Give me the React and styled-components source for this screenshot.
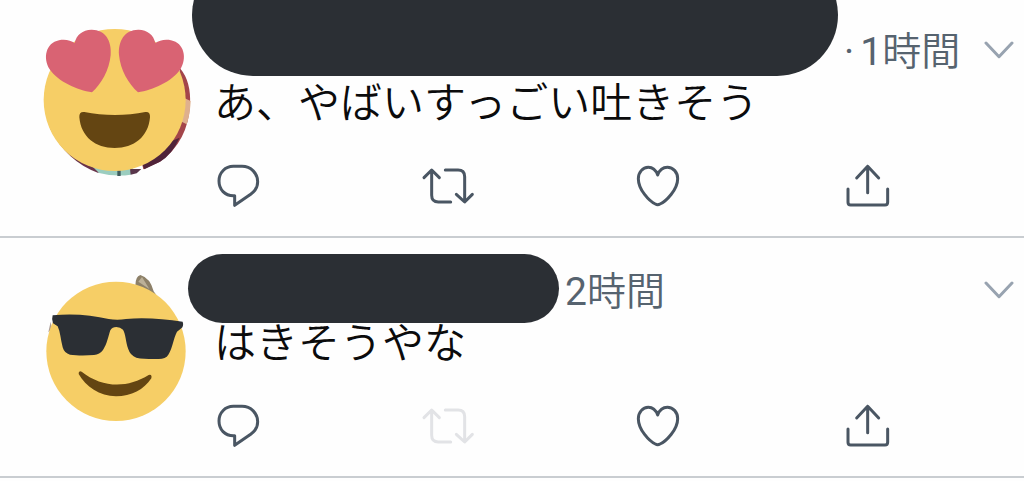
import React from "react";
import styled, { createGlobalStyle } from "styled-components";

const GlobalStyle = createGlobalStyle`
  body {
    margin: 0;
    background-color: #fefefe;
    overflow: hidden;
    font-family: "Noto Sans CJK JP", "Noto Sans", sans-serif;
    font-weight: 350;
  }
`;

const Feed = styled.main`
  margin-top: -2px;
`;

const Tweet = styled.article`
  display: flex;
  gap: 14px;
  padding: 24px 10px 22px 36px;
  border-bottom: 2px solid #c9cdd1;
`;

const Avatar = styled.svg`
  flex: none;
  width: 160px;
  height: 160px;
`;

const Body = styled.div`
  flex: 1;
  min-width: 0;
  padding-top: 4px;
`;

const Header = styled.header`
  display: flex;
  align-items: center;
  height: 48px;
`;

const Name = styled.div`
  position: relative;
  flex: none;
  align-self: stretch;
  width: ${({ $width }) => $width};
`;

const Redaction = styled.span`
  position: absolute;
  inset: ${({ $inset }) => $inset};
  z-index: 1;
  border-radius: 61px;
  background-color: #2b2f34;
`;

const Time = styled.time`
  margin-left: 6px;
  font-family: "Noto Sans CJK JP", sans-serif;
  font-size: 39px;
  line-height: 48px;
  white-space: nowrap;
  color: #56636f;
`;

const Latin = styled.span`
  font-family: Roboto, sans-serif;
  font-weight: 400;
`;

const Dot = styled(Latin)`
  margin-right: 6px;
`;

const MenuButton = styled.button`
  display: flex;
  margin-left: auto;
  padding: 0;
  border: none;
  background: none;
  color: #98a3b0;
`;

const Text = styled.p`
  margin: 0;
  padding-left: 4px;
  font-size: 42px;
  line-height: 52px;
  white-space: nowrap;
  color: #0b0b0c;
`;

const Actions = styled.div`
  display: flex;
  justify-content: space-between;
  margin-top: 32px;
  padding-right: 118px;
`;

const ActionButton = styled.button`
  display: flex;
  padding: 0;
  border: none;
  background: none;
  color: #4a5663;

  &:disabled {
    color: #e2e3e6;
  }
`;

const Icon = styled.svg`
  width: 56px;
  height: 56px;
  fill: none;
  stroke: currentColor;
  stroke-width: 9;
  stroke-linecap: round;
  stroke-linejoin: round;
`;

const Chevron = styled(Icon)`
  width: 30px;
  height: 30px;
`;

const icons = {
  reply:
    "M70 25H96C123 25 143 46 143 71C143 87 136 99 122 109L74 142V113H70C45 113 27 95 27 69C27 44 46 25 70 25Z",
  retweet:
    "M12 59L35 36L58 59M35 38V112Q35 132 55 132H92M76 36H114Q134 36 134 56V130M109 109L134 132L157 109",
  like: "M83 51C77 35 67 28 55 28C38 28 25 43 25 62C25 95 58 130 76 138Q83 142 90 138C108 130 143 95 143 62C143 43 130 28 112 28C99 28 89 35 83 51Z",
  share: "M83 104V25M50 60L83 25L116 60M24 93V133Q24 141 32 141H135Q143 141 143 133V93",
};

const HeartEyes = () => (
  <Avatar viewBox="18 21 480 480" role="img" aria-label="heart eyes">
    <path d="M450 160Q484 200 480 270Q474 380 390 440L340 463L330 420L420 330Z" fill="#a3454a" />
    <path d="M464 250L482 258Q480 300 470 328L455 320Z" fill="#dfb08d" />
    <path d="M420 380L449 368Q425 420 390 440L343 463L335 440Z" fill="#4f2339" />
    <path d="M60 340Q110 440 205 474L220 450Z" fill="#69334a" />
    <path d="M185 452L207 474Q255 486 302 479L312 450Z" fill="#9bcdbf" />
    <path d="M262 462H272V483H262Z" fill="#3f5b5b" />
    <path d="M300 462H334L320 475L302 479Z" fill="#59364b" />
    <circle cx="254" cy="255" r="213" fill="#f6ce66" />
    <path
      d="M186 232C142 226 84 200 59 163C38 130 47 84 87 76C106 72 123 77 134 84C139 59 158 45 184 44C225 43 246 77 242 120C238 165 214 207 186 232Z"
      fill="#d96373"
    />
    <path
      d="M324 232C368 226 426 200 451 163C472 130 463 84 423 76C404 72 387 77 376 84C371 59 352 45 326 44C285 43 264 77 267 120C271 165 296 207 324 232Z"
      fill="#d96373"
    />
    <path
      d="M163 291C220 303 290 303 346 291Q361 289 360 307C355 366 312 399 254 399C196 399 153 366 148 307Q147 289 163 291Z"
      fill="#644512"
    />
  </Avatar>
);

const Sunglasses = () => (
  <Avatar viewBox="18 -9 480 480" role="img" aria-label="sunglasses">
    <path d="M316 62Q316 34 331 30Q361 39 371 79L379 90L340 82Z" fill="#8d8068" />
    <path d="M325 50L336 36L358 72Z" fill="#bcb098" />
    <path d="M62 170L55 202L66 192Z" fill="#a99a94" />
    <circle cx="258" cy="259" r="209" fill="#f6ce66" />
    <path
      d="M68 151C130 144 187 151 236 162Q262 167 288 162C345 157 400 162 458 170Q462 183 454 190L441 200C430 220 428 249 415 269Q407 282 386 282C365 283 337 282 319 278Q301 272 295 253C287 230 287 207 279 194Q271 186 259 186Q247 186 241 196C235 214 231 237 219 255Q209 269 192 270C168 272 140 272 120 269Q103 265 98 247C92 224 91 201 83 184L69 175Q64 164 68 151Z"
      fill="#2b2f34"
    />
    <path
      d="M155 320C217 369 292 370 356 330Q367 327 364 340C342 374 304 394 258 394C209 393 167 365 146 327Q145 316 155 320Z"
      fill="#644512"
    />
  </Avatar>
);

const tweets = [
  {
    id: 1,
    avatar: <HeartEyes />,
    nameWidth: "628px",
    inset: "-72px 0 -2px -18px",
    showDot: true,
    hours: 1,
    text: "あ、やばいすっごい吐きそう",
    canRetweet: true,
  },
  {
    id: 2,
    avatar: <Sunglasses />,
    nameWidth: "349px",
    inset: "-12px 0 -9px -22px",
    showDot: false,
    hours: 2,
    text: "はきそうやな",
    canRetweet: false,
  },
];

const Action = ({ name, disabled }) => (
  <ActionButton type="button" aria-label={name} disabled={disabled}>
    <Icon viewBox="0 0 168 168">
      <path d={icons[name]} />
    </Icon>
  </ActionButton>
);

const App = () => {
  return (
    <>
      <GlobalStyle />
      <Feed>
        {tweets.map((tweet) => (
          <Tweet key={tweet.id}>
            {tweet.avatar}
            <Body>
              <Header>
                <Name $width={tweet.nameWidth}>
                  <Redaction $inset={tweet.inset} />
                </Name>
                <Time>
                  {tweet.showDot && <Dot>·</Dot>}
                  <Latin>{tweet.hours}</Latin>時間
                </Time>
                <MenuButton type="button" aria-label="menu">
                  <Chevron viewBox="0 0 90 90">
                    <path d="M6 24L45 65L84 24" />
                  </Chevron>
                </MenuButton>
              </Header>
              <Text>{tweet.text}</Text>
              <Actions>
                <Action name="reply" />
                <Action name="retweet" disabled={!tweet.canRetweet} />
                <Action name="like" />
                <Action name="share" />
              </Actions>
            </Body>
          </Tweet>
        ))}
      </Feed>
    </>
  );
};

export default App;
